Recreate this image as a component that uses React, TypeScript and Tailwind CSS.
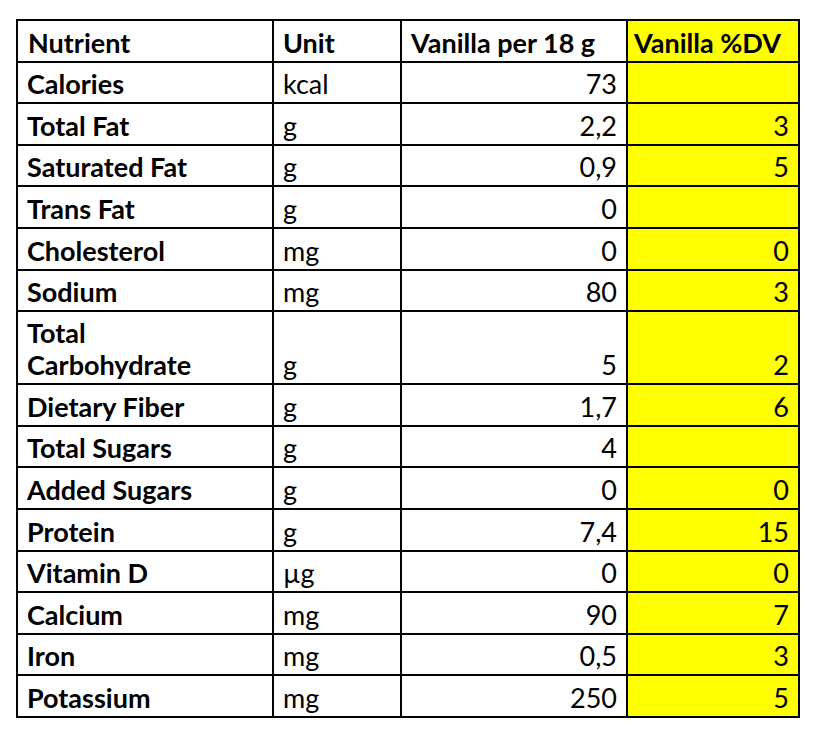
import React from "react";

type Row = { name: string; unit: string; amount: string; dv: string; double?: boolean };

const rows: Row[] = [
  { name: "Calories", unit: "kcal", amount: "73", dv: "" },
  { name: "Total Fat", unit: "g", amount: "2,2", dv: "3" },
  { name: "Saturated Fat", unit: "g", amount: "0,9", dv: "5" },
  { name: "Trans Fat", unit: "g", amount: "0", dv: "" },
  { name: "Cholesterol", unit: "mg", amount: "0", dv: "0" },
  { name: "Sodium", unit: "mg", amount: "80", dv: "3" },
  { name: "Total Carbohydrate", unit: "g", amount: "5", dv: "2", double: true },
  { name: "Dietary Fiber", unit: "g", amount: "1,7", dv: "6" },
  { name: "Total Sugars", unit: "g", amount: "4", dv: "" },
  { name: "Added Sugars", unit: "g", amount: "0", dv: "0" },
  { name: "Protein", unit: "g", amount: "7,4", dv: "15" },
  { name: "Vitamin D", unit: "µg", amount: "0", dv: "0" },
  { name: "Calcium", unit: "mg", amount: "90", dv: "7" },
  { name: "Iron", unit: "mg", amount: "0,5", dv: "3" },
  { name: "Potassium", unit: "mg", amount: "250", dv: "5" },
];

export default function App() {
  return (
    <div className="min-h-[730px] w-[814px] bg-white pt-[19px] pl-[16px]">
      <div
        className="grid w-[784px] grid-cols-[254px_126px_224px_170px] grid-rows-[repeat(7,39.6px)_71px_repeat(8,39.6px)] gap-[2px] bg-black p-[2px] text-[27px] leading-[32px] text-black"
        style={{ fontFamily: "Lato, 'Liberation Sans', sans-serif" }}
      >
        <div className="flex items-end bg-white pb-[2px] pl-[10px] font-bold">Nutrient</div>
        <div className="flex items-end bg-white pb-[2px] pl-[9px] font-bold">Unit</div>
        <div className="flex items-end whitespace-nowrap bg-white pb-[2px] pl-[9px] font-bold">Vanilla per 18 g</div>
        <div className="flex items-end whitespace-nowrap bg-[#ffff00] pb-[2px] pl-[6px] font-bold">Vanilla %DV</div>
        {rows.map((r) => (
          <React.Fragment key={r.name}>
            <div className="flex items-end bg-white pb-[2px] pl-[9px] font-bold">
              {r.double ? (
                <span>
                  Total
                  <br />
                  Carbohydrate
                </span>
              ) : (
                r.name
              )}
            </div>
            <div className="flex items-end bg-white pb-[2px] pl-[9px]">{r.unit}</div>
            <div className="flex items-end justify-end bg-white pb-[2px] pr-[9px]">{r.amount}</div>
            <div className="flex items-end justify-end bg-[#ffff00] pb-[2px] pr-[9px]">{r.dv}</div>
          </React.Fragment>
        ))}
      </div>
    </div>
  );
}
